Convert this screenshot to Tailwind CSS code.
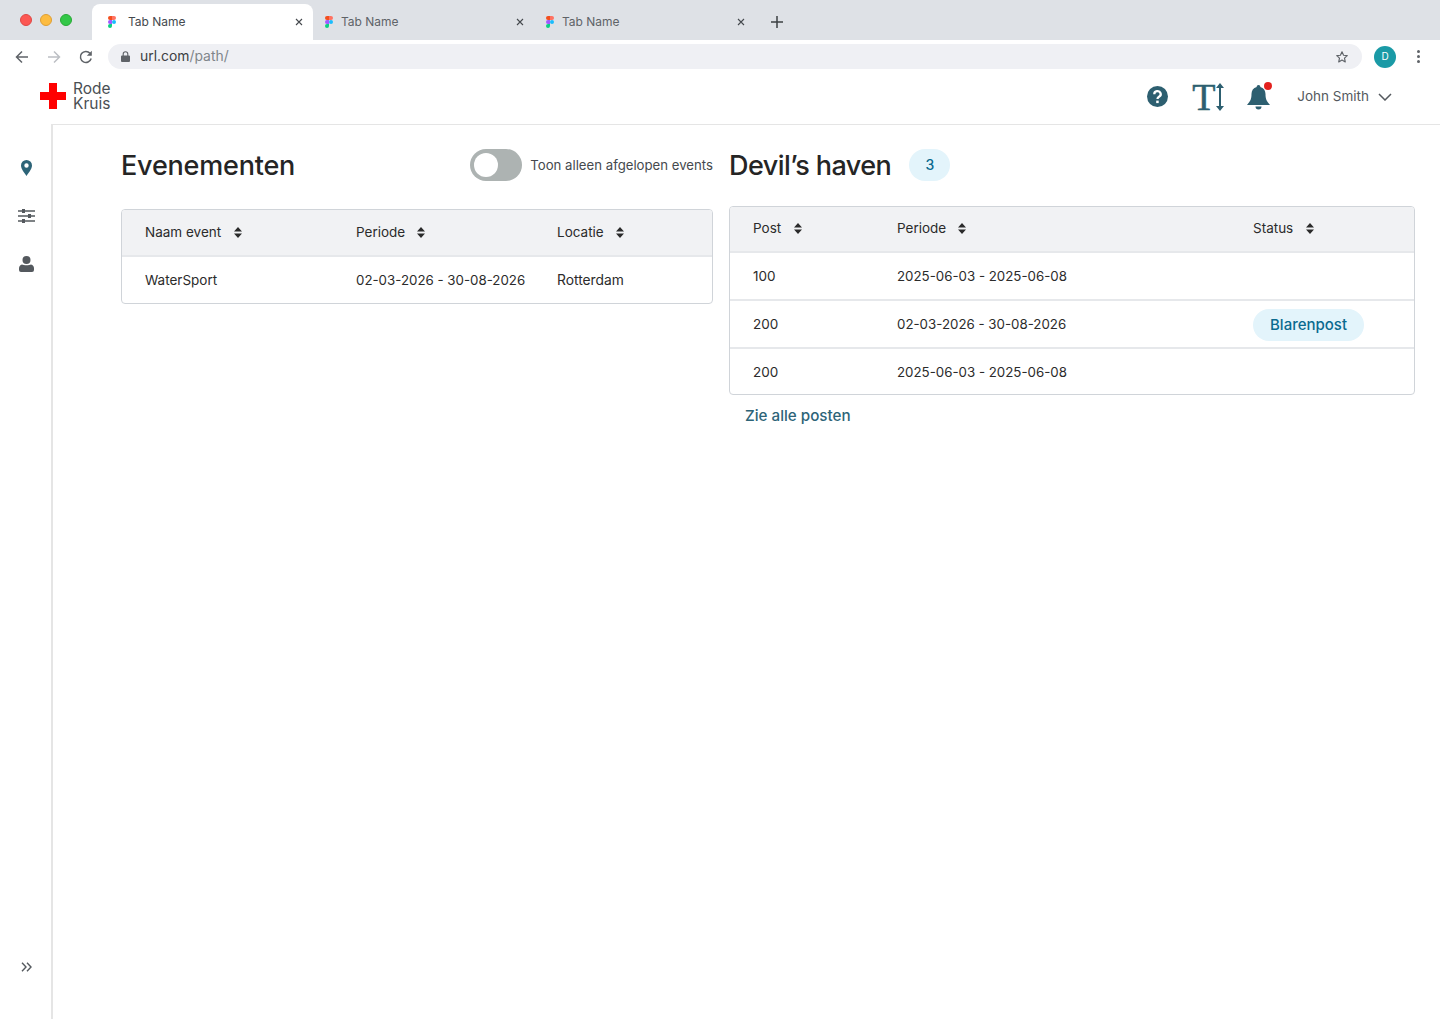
<!DOCTYPE html>
<html lang="en">
<head>
    <meta charset="UTF-8">
    <title>Evenementen</title>
    <script src="https://cdn.jsdelivr.net/npm/@tailwindcss/browser@4"></script>
</head>
<body class="bg-white h-[1019px] w-[1440px] overflow-hidden flex flex-col font-['Inter',sans-serif] text-[#2b2b2b]">

    <!-- Browser tab strip -->
    <div class="h-10 bg-[#dee1e6] flex items-end shrink-0">
        <div class="w-[92px] h-10 flex items-center gap-2 pl-5 pb-[1px]">
            <span class="w-3 h-3 rounded-full bg-[#fc5753] border border-[#df4744]"></span>
            <span class="w-3 h-3 rounded-full bg-[#fdbc40] border border-[#de9f34]"></span>
            <span class="w-3 h-3 rounded-full bg-[#33c748] border border-[#27aa35]"></span>
        </div>
        <div class="w-[221px] h-9 bg-white rounded-t-lg flex items-center pl-4 pr-[10px] text-xs text-[#45494e]">
            <svg class="w-[8px] h-3 shrink-0" viewBox="0 0 8 12"><path fill="#f24e1e" d="M0 2a2 2 0 0 1 2-2h2v4H2a2 2 0 0 1-2-2z"/><path fill="#ff7262" d="M4 0h2a2 2 0 0 1 0 4H4z"/><path fill="#a259ff" d="M0 6a2 2 0 0 1 2-2h2v4H2a2 2 0 0 1-2-2z"/><circle fill="#1abcfe" cx="6" cy="6" r="2"/><path fill="#0acf83" d="M0 10a2 2 0 0 1 2-2h2v2a2 2 0 0 1-4 0z"/></svg>
            <span class="ml-3 grow">Tab Name</span>
            <svg class="w-2 h-2" viewBox="0 0 8 8"><path d="M1 1l6 6M7 1L1 7" stroke="#45494e" stroke-width="1.1"/></svg>
        </div>
        <div class="w-[221px] h-9 flex items-center pl-3 pr-[10px] text-xs text-[#5f6368]">
            <svg class="w-[8px] h-3 shrink-0" viewBox="0 0 8 12"><path fill="#f24e1e" d="M0 2a2 2 0 0 1 2-2h2v4H2a2 2 0 0 1-2-2z"/><path fill="#ff7262" d="M4 0h2a2 2 0 0 1 0 4H4z"/><path fill="#a259ff" d="M0 6a2 2 0 0 1 2-2h2v4H2a2 2 0 0 1-2-2z"/><circle fill="#1abcfe" cx="6" cy="6" r="2"/><path fill="#0acf83" d="M0 10a2 2 0 0 1 2-2h2v2a2 2 0 0 1-4 0z"/></svg>
            <span class="ml-2 grow">Tab Name</span>
            <svg class="w-2 h-2" viewBox="0 0 8 8"><path d="M1 1l6 6M7 1L1 7" stroke="#45494e" stroke-width="1.1"/></svg>
        </div>
        <div class="w-[221px] h-9 flex items-center pl-3 pr-[10px] text-xs text-[#5f6368]">
            <svg class="w-[8px] h-3 shrink-0" viewBox="0 0 8 12"><path fill="#f24e1e" d="M0 2a2 2 0 0 1 2-2h2v4H2a2 2 0 0 1-2-2z"/><path fill="#ff7262" d="M4 0h2a2 2 0 0 1 0 4H4z"/><path fill="#a259ff" d="M0 6a2 2 0 0 1 2-2h2v4H2a2 2 0 0 1-2-2z"/><circle fill="#1abcfe" cx="6" cy="6" r="2"/><path fill="#0acf83" d="M0 10a2 2 0 0 1 2-2h2v2a2 2 0 0 1-4 0z"/></svg>
            <span class="ml-2 grow">Tab Name</span>
            <svg class="w-2 h-2" viewBox="0 0 8 8"><path d="M1 1l6 6M7 1L1 7" stroke="#45494e" stroke-width="1.1"/></svg>
        </div>
        <div class="h-9 flex items-center pl-[16px]">
            <svg class="w-3 h-3" viewBox="0 0 12 12"><path d="M6 0v12M0 6h12" stroke="#3c4043" stroke-width="1.5"/></svg>
        </div>
    </div>

    <!-- Browser toolbar -->
    <div class="h-[29px] pt-[4px] flex items-center shrink-0">
        <div class="w-[108px] flex items-center pl-[14px] gap-[16px]">
            <svg class="w-[16px] h-[16px]" viewBox="0 0 16 16" fill="none"><path d="M14 8H2.500M8 2.500L2.500 8 8 13.500" stroke="#5f6368" stroke-width="1.500"/></svg>
            <svg class="w-[16px] h-[16px]" viewBox="0 0 16 16" fill="none"><path d="M2 8h11.500M8 2.500L13.500 8 8 13.500" stroke="#bcbfc4" stroke-width="1.500"/></svg>
            <svg class="w-[16px] h-[16px]" viewBox="0 0 16 16" fill="none"><path d="M13.200 9.500A5.500 5.500 0 1 1 12 4.200" stroke="#5f6368" stroke-width="1.500"/><path d="M13.800 1.800v5h-5z" fill="#5f6368"/></svg>
        </div>
        <div class="w-[1254px] h-[25px] bg-[#eff0f4] rounded-full flex items-center pl-[13px] pr-[13px] text-[13.9px]">
            <svg class="w-[9px] h-[11px]" viewBox="0 0 9 11"><path fill="#5f6368" d="M1 4.500h7a1 1 0 0 1 1 1V10a1 1 0 0 1-1 1H1a1 1 0 0 1-1-1V5.500a1 1 0 0 1 1-1z"/><path d="M2.200 5V3a2.300 2.300 0 0 1 4.600 0v2" fill="none" stroke="#5f6368" stroke-width="1.100"/></svg>
            <span class="ml-[10px] text-[#3c4043]">url.com<span class="text-[#80868b]">/path/</span></span>
            <svg class="w-[14px] h-[14px] ml-auto" viewBox="0 0 24 24" fill="none"><path d="M12 3l2.700 6 6.300.7-4.700 4.300 1.300 6.500L12 17.200 6.400 20.500l1.300-6.500L3 9.700 9.300 9z" stroke="#5f6368" stroke-width="2" stroke-linejoin="round"/></svg>
        </div>
        <div class="ml-[12px] w-[22px] h-[22px] rounded-full bg-[#1a9aa6] text-white text-[10px] flex items-center justify-center">D</div>
        <div class="ml-[21px] flex flex-col gap-[2px]">
            <span class="w-[3px] h-[3px] rounded-full bg-[#5f6368]"></span>
            <span class="w-[3px] h-[3px] rounded-full bg-[#5f6368]"></span>
            <span class="w-[3px] h-[3px] rounded-full bg-[#5f6368]"></span>
        </div>
    </div>

    <!-- App header -->
    <header class="h-[56px] flex items-center shrink-0 border-b border-[#e5e5e5] ml-[51px] pr-[48px]">
        <div class="flex items-center -ml-[11px] -mt-[1px]">
            <svg class="w-[26px] h-[26px]" viewBox="0 0 26 26"><path fill="#ff0000" d="M9 0h8v9h9v8h-9v9H9v-9H0V9h9z"/></svg>
            <div class="ml-[7px] text-[15.5px] leading-[15px] text-[#4a4f54]">
                <div>Rode</div>
                <div>Kruis</div>
            </div>
        </div>
        <div class="ml-auto flex items-center">
            <svg class="w-[21px] h-[21px]" viewBox="0 0 21 21"><circle cx="10.500" cy="10.500" r="10.500" fill="#2d5f70"/><path d="M7.300 8.200a3.200 3 0 1 1 4.700 2.600c-1 .6-1.500 1-1.500 2.200" fill="none" stroke="#fff" stroke-width="2.300"/><rect x="9.200" y="14.600" width="2.500" height="2.500" fill="#fff"/></svg>
            <div class="ml-[24px] flex items-center">
                <span class="font-['Liberation_Serif',serif] text-[38px] leading-[28px] text-[#2d5f70] w-[24px] [-webkit-text-stroke:0.5px_#2d5f70]">T</span>
                <svg class="w-[8px] h-[28px]" viewBox="0 0 8 28"><path d="M4 3v22" stroke="#2d5f70" stroke-width="2"/><path d="M4 0l4 5H0zM4 28l4-5H0z" fill="#2d5f70"/></svg>
            </div>
            <div class="ml-[23px] relative w-[26px] h-[26px]">
                <svg class="w-[23px] h-[25px] mt-[1px]" viewBox="0 0 23 25"><path fill="#2d5f70" d="M11.500 0a1.800 1.800 0 0 1 1.800 2c3.500.8 5.200 3.700 5.200 7 0 5 1 7 4.500 11H0c3.500-4 4.500-6 4.500-11 0-3.300 1.700-6.200 5.200-7a1.800 1.800 0 0 1 1.800-2z"/><path fill="#2d5f70" d="M8.500 21.500h6a3 3 0 0 1-6 0z"/></svg>
                <span class="absolute top-[-2px] right-[1px] w-2 h-2 rounded-full bg-[#e3211e]"></span>
            </div>
            <span class="ml-[24px] text-[13.5px] text-[#54595e]">John Smith</span>
            <svg class="ml-[9px] w-[14px] h-[8px]" viewBox="0 0 14 8" fill="none"><path d="M1 1l6 6 6-6" stroke="#54595e" stroke-width="1.500"/></svg>
        </div>
    </header>

    <div class="flex grow min-h-0">
        <!-- Sidebar -->
        <aside class="w-[53px] border-r-2 border-[#e5e5e5] shrink-0 flex flex-col items-center pl-[1px] pt-[35px] pb-[47px]">
            <svg class="w-[11px] h-[16px]" viewBox="0 0 11 16"><path fill-rule="evenodd" fill="#2d6478" d="M5.500 0A5.500 5.500 0 0 1 11 5.500C11 9 7.500 13 5.500 16 3.500 13 0 9 0 5.500A5.500 5.500 0 0 1 5.500 0zm0 3.300a2.200 2.200 0 1 0 0 4.400 2.200 2.200 0 0 0 0-4.400z"/></svg>
            <svg class="w-[17px] h-[14px] mt-[33px]" viewBox="0 0 17 14"><path d="M0 2h17M0 7h17M0 12h17" stroke="#54595e" stroke-width="1.500"/><rect x="4" y="0" width="3" height="4" fill="#54595e"/><rect x="10" y="5" width="3" height="4" fill="#54595e"/><rect x="4" y="10" width="3" height="4" fill="#54595e"/></svg>
            <svg class="w-[15px] h-[16px] mt-[33px]" viewBox="0 0 15 16"><circle cx="7.500" cy="4" r="4" fill="#54595e"/><path fill="#54595e" d="M3 8.500c1.500 1 7.500 1 9 0 2 .5 3 2 3 4V14a2 2 0 0 1-2 2H2a2 2 0 0 1-2-2v-1.500c0-2 1-3.500 3-4z"/></svg>
            <svg class="w-[11px] h-[10px] mt-auto" viewBox="0 0 11 10" fill="none"><path d="M1 .8L5 5 1 9.200M6 .8L10 5 6 9.200" stroke="#54595e" stroke-width="1.400"/></svg>
        </aside>

        <!-- Content -->
        <main class="flex pl-[68px] pt-[24px] gap-4 items-start">
            <section class="w-[592px]">
                <div class="flex items-center h-[32px]">
                    <h1 class="mt-[2px] text-[27px] font-medium leading-8 tracking-[-0.2px] text-[#252525]">Evenementen</h1>
                    <div class="ml-auto flex items-center gap-2">
                        <span class="w-[52px] h-8 rounded-full bg-[#adb3b2] flex items-center pl-[4px]"><span class="w-6 h-6 rounded-full bg-white"></span></span>
                        <span class="mt-[2px] text-[13.2px] text-[#45494e]">Toon alleen afgelopen events</span>
                    </div>
                </div>
                <div class="mt-[28px] border border-[#d0d4d9] rounded-[4px] overflow-hidden text-[13.5px]">
                    <div class="grid grid-cols-[211px_201px_1fr] h-[47px] pl-[23px] items-center bg-[#f1f2f4] border-b-2 border-[#e6e8eb]">
                        <div class="flex items-center">Naam event <svg class="ml-[13px] w-2 h-[11px]" viewBox="0 0 8 11"><path fill="#2b2b2b" d="M4 0l4 4.500H0zM4 11L0 6.500h8z"/></svg></div>
                        <div class="flex items-center">Periode <svg class="ml-[12px] w-2 h-[11px]" viewBox="0 0 8 11"><path fill="#2b2b2b" d="M4 0l4 4.500H0zM4 11L0 6.500h8z"/></svg></div>
                        <div class="flex items-center">Locatie <svg class="ml-[12px] w-2 h-[11px]" viewBox="0 0 8 11"><path fill="#2b2b2b" d="M4 0l4 4.500H0zM4 11L0 6.500h8z"/></svg></div>
                    </div>
                    <div class="grid grid-cols-[211px_201px_1fr] h-[46px] pl-[23px] items-center">
                        <div>WaterSport</div><div class="mt-[2px] text-[13.3px]">02-03-2026 - 30-08-2026</div><div class="text-[13.8px]">Rotterdam</div>
                    </div>
                </div>
            </section>

            <section class="w-[686px]">
                <div class="flex items-center h-[32px]">
                    <h1 class="mt-[2px] text-[27px] font-medium leading-8 tracking-[-0.55px] text-[#252525]">Devil’s haven</h1>
                    <span class="ml-[18px] w-[41px] h-8 rounded-full bg-[#e3f4fb] text-[#0a6a8f] text-sm font-medium flex items-center justify-center">3</span>
                </div>
                <div class="mt-[25px] border border-[#d0d4d9] rounded-[4px] overflow-hidden text-[13.5px]">
                    <div class="grid grid-cols-[144px_356px_1fr] h-[46px] pl-[23px] pb-[2px] items-center bg-[#f1f2f4] border-b-2 border-[#e6e8eb]">
                        <div class="flex items-center">Post <svg class="ml-[13px] w-2 h-[11px]" viewBox="0 0 8 11"><path fill="#2b2b2b" d="M4 0l4 4.500H0zM4 11L0 6.500h8z"/></svg></div>
                        <div class="flex items-center">Periode <svg class="ml-[12px] w-2 h-[11px]" viewBox="0 0 8 11"><path fill="#2b2b2b" d="M4 0l4 4.500H0zM4 11L0 6.500h8z"/></svg></div>
                        <div class="flex items-center">Status <svg class="ml-[13px] w-2 h-[11px]" viewBox="0 0 8 11"><path fill="#2b2b2b" d="M4 0l4 4.500H0zM4 11L0 6.500h8z"/></svg></div>
                    </div>
                    <div class="grid grid-cols-[144px_356px_1fr] h-[48px] pl-[23px] items-center border-b-2 border-[#e6e8eb]">
                        <div>100</div><div class="mt-[2px] text-[13.3px]">2025-06-03 - 2025-06-08</div><div></div>
                    </div>
                    <div class="grid grid-cols-[144px_356px_1fr] h-[48px] pl-[23px] items-center border-b-2 border-[#e6e8eb]">
                        <div>200</div><div class="mt-[2px] text-[13.3px]">02-03-2026 - 30-08-2026</div>
                        <div class="mt-[2px]"><span class="inline-flex items-center h-8 px-[17px] rounded-full bg-[#e3f4fb] text-[#0a6a8f] text-[15px] font-medium">Blarenpost</span></div>
                    </div>
                    <div class="grid grid-cols-[144px_356px_1fr] h-[45px] pl-[23px] items-center">
                        <div class="mt-[2px]">200</div><div class="mt-[2px] text-[13.3px]">2025-06-03 - 2025-06-08</div><div></div>
                    </div>
                </div>
                <a class="block mt-[10px] ml-4 text-[15.2px] font-medium text-[#2d6478]">Zie alle posten</a>
            </section>
        </main>
    </div>
</body>
</html>
